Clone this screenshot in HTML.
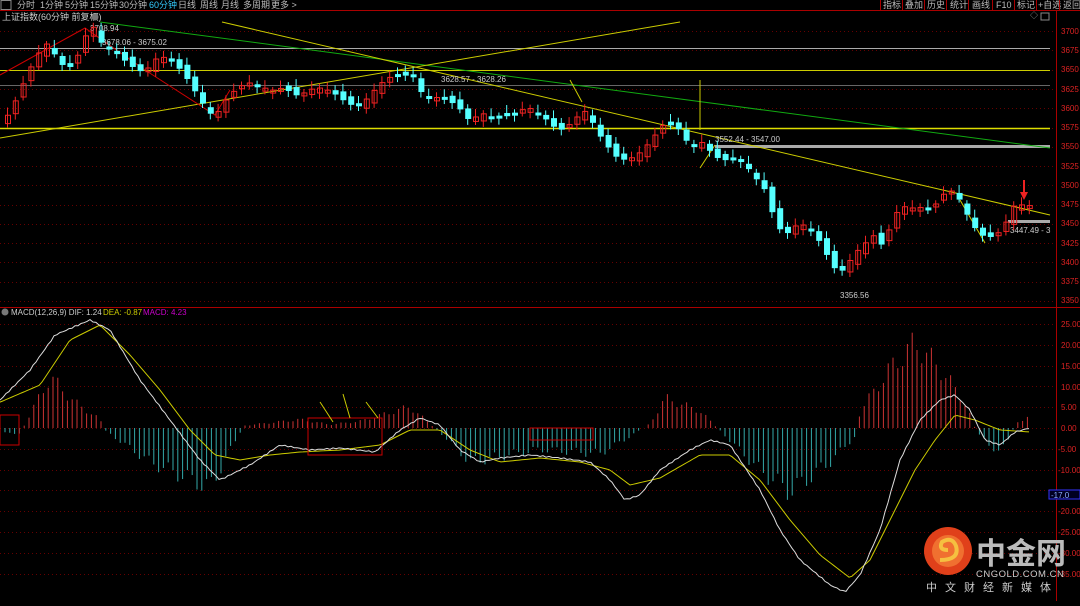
<!DOCTYPE html>
<html><head><meta charset="utf-8"><style>
body{margin:0;background:#000;width:1080px;height:601px;overflow:hidden;font-family:"Liberation Sans","Noto Sans CJK SC",sans-serif;}
svg text{font-family:"Liberation Sans","Noto Sans CJK SC",sans-serif;}
</style></head><body>
<svg id="s" width="1080" height="601" xmlns="http://www.w3.org/2000/svg">
<rect width="1080" height="601" fill="#000"/>
<g id="grid"></g>
<line x1="0" y1="10.5" x2="1080" y2="10.5" stroke="#a00" />
<rect x="1" y="0.5" width="10" height="9" fill="none" stroke="#888"/>
<g font-size="9" fill="#bbb">
<text x="17" y="8">分时</text><text x="40" y="8">1分钟</text><text x="65" y="8">5分钟</text><text x="90" y="8">15分钟</text><text x="119" y="8">30分钟</text>
<text x="149" y="8" fill="#3cf">60分钟</text><text x="178" y="8">日线</text><text x="200" y="8">周线</text><text x="221" y="8">月线</text><text x="243" y="8">多周期</text><text x="271" y="8">更多 &gt;</text>
<text x="883" y="8">指标</text><text x="905" y="8">叠加</text><text x="927" y="8">历史</text><text x="950" y="8">统计</text><text x="972" y="8">画线</text><text x="996" y="8">F10</text><text x="1017" y="8">标记</text><text x="1038" y="8">+自选</text><text x="1063" y="8">返回</text>
</g>
<g stroke="#a00"><line x1="880.5" y1="0" x2="880.5" y2="10"/><line x1="902.5" y1="0" x2="902.5" y2="10"/><line x1="924.5" y1="0" x2="924.5" y2="10"/><line x1="946.5" y1="0" x2="946.5" y2="10"/><line x1="968.5" y1="0" x2="968.5" y2="10"/><line x1="992.5" y1="0" x2="992.5" y2="10"/><line x1="1014.5" y1="0" x2="1014.5" y2="10"/><line x1="1036.5" y1="0" x2="1036.5" y2="10"/><line x1="1059.5" y1="0" x2="1059.5" y2="10"/></g>
<text x="2" y="20" font-size="9" fill="#ccc">上证指数(60分钟 前复权)</text>
<circle cx="95" cy="17" r="3.5" fill="#777"/>
<line x1="1056.5" y1="11" x2="1056.5" y2="601" stroke="#a00"/>
<line x1="0" y1="307.5" x2="1080" y2="307.5" stroke="#a00"/>
<g font-size="8" fill="#d22">
<text x="1061" y="34">3700</text><text x="1061" y="53">3675</text><text x="1061" y="72">3650</text><text x="1061" y="92">3625</text><text x="1061" y="111">3600</text><text x="1061" y="130">3575</text><text x="1061" y="149">3550</text><text x="1061" y="169">3525</text><text x="1061" y="188">3500</text><text x="1061" y="207">3475</text><text x="1061" y="226">3450</text><text x="1061" y="246">3425</text><text x="1061" y="265">3400</text><text x="1061" y="284">3375</text><text x="1061" y="303">3350</text>
<text x="1061" y="327">25.00</text><text x="1061" y="348">20.00</text><text x="1061" y="369">15.00</text><text x="1061" y="390">10.00</text><text x="1061" y="410">5.00</text><text x="1061" y="431">0.00</text><text x="1058" y="452">-5.00</text><text x="1058" y="473">-10.00</text><text x="1058" y="514">-20.00</text><text x="1058" y="535">-25.00</text><text x="1058" y="556">-30.00</text><text x="1058" y="577">-35.00</text>
</g>
<rect x="1049" y="490" width="31" height="9" fill="#002" stroke="#33f"/>
<text x="1051" y="498" font-size="8" fill="#8af">-17.0</text>
<text x="1030" y="18" font-size="8" fill="#999">◇</text>
<rect x="1041" y="13" width="8" height="7" fill="none" stroke="#888"/>
<circle cx="5" cy="312" r="3.5" fill="#777"/>
<text x="11" y="315" font-size="8" fill="#ccc">MACD(12,26,9)  DIF: 1.24</text>
<text x="103" y="315" font-size="8" fill="#cc0">DEA: -0.87</text>
<text x="143" y="315" font-size="8" fill="#c0c">MACD: 4.23</text>
<line x1="0" y1="48.5" x2="1050" y2="48.5" stroke="#aaa"/>
<line x1="0" y1="70.5" x2="1050" y2="70.5" stroke="#cc0"/>
<line x1="0" y1="85.5" x2="1050" y2="85.5" stroke="#666"/>
<line x1="0" y1="128.5" x2="1050" y2="128.5" stroke="#dd0" stroke-width="1.5"/>
<line x1="715" y1="146.5" x2="1050" y2="146.5" stroke="#aaa" stroke-width="3"/>
<line x1="1008" y1="221.5" x2="1050" y2="221.5" stroke="#aaa" stroke-width="3"/>
<line x1="100" y1="22" x2="1050" y2="148" stroke="#1a1"/>
<line x1="0" y1="138" x2="680" y2="22" stroke="#cc0"/>
<line x1="222" y1="22" x2="1050" y2="215" stroke="#cc0"/>
<line x1="700" y1="80" x2="700" y2="130" stroke="#cc0"/>
<line x1="570" y1="80" x2="582" y2="102" stroke="#cc0"/>
<line x1="700" y1="168" x2="715" y2="145" stroke="#cc0"/>
<line x1="960" y1="200" x2="985" y2="243" stroke="#cc0"/>
<path d="M0 75 L85 28 L145 70 L215 115 L230 90" fill="none" stroke="#c00"/>
<path d="M1024 180 L1024 195" stroke="#e22" stroke-width="2"/><path d="M1020 192 L1024 200 L1028 192Z" fill="#e22"/>
<g font-size="8" fill="#ccc">
<text x="90" y="31">3708.94</text><text x="102" y="45">3678.06 - 3675.02</text><text x="441" y="82">3628.57 - 3628.26</text><text x="715" y="142">3552.44 - 3547.00</text><text x="1010" y="233">3447.49 - 3</text><text x="840" y="298">3356.56</text>
</g>
<g id="cand"></g>
<g id="hist"></g>
<path id="dea" fill="none" stroke="#cc0"/>
<path id="dif" fill="none" stroke="#ddd"/>
<rect x="0" y="415" width="19" height="30" fill="none" stroke="#c00"/>
<rect x="308" y="418" width="74" height="37" fill="none" stroke="#c00"/>
<rect x="530" y="428" width="63" height="12" fill="none" stroke="#c00"/>
<path d="M320 402 L333 422 M343 394 L350 418 M366 402 L378 418" stroke="#cc0"/>
<circle cx="948" cy="551" r="24" fill="#e0401a"/>
<circle cx="948" cy="551" r="16" fill="#f07030"/>
<path d="M940 560 Q960 560 956 546 Q952 536 942 542 Q938 550 948 550" fill="none" stroke="#f5c040" stroke-width="4"/>
<text x="976" y="564" font-size="30" font-weight="bold" fill="#bbb">中金网</text>
<text x="976" y="577" font-size="9.5" fill="#ccc" letter-spacing="0.5">CNGOLD.COM.CN</text>
<text x="926" y="591" font-size="11" fill="#ccc" letter-spacing="8">中文财经新媒体</text>
</svg>
<script>
const NS="http://www.w3.org/2000/svg";
function el(t,a,p){const e=document.createElementNS(NS,t);for(const k in a)e.setAttribute(k,a[k]);document.getElementById(p).appendChild(e);return e;}
for(const y of [31,50,70,89,108,128,147,166,185,205,224,243,262,282,301]) el('line',{x1:0,x2:1056,y1:y+.5,y2:y+.5,stroke:'#600','stroke-dasharray':'1 3'},'grid');
for(let i=0;i<13;i++){const y=324+i*20.8;el('line',{x1:0,x2:1056,y1:Math.round(y)+.5,y2:Math.round(y)+.5,stroke:'#600','stroke-dasharray':'1 3'},'grid');}
function interp(pts,x){for(let i=1;i<pts.length;i++){if(x<=pts[i][0]){const a=pts[i-1],b=pts[i];return a[1]+(b[1]-a[1])*(x-a[0])/(b[0]-a[0]);}}return pts[pts.length-1][1];}
const P=[[5,115],[20,95],[40,60],[50,45],[60,60],[75,60],[85,35],[95,30],[105,55],[125,60],[145,65],[160,55],[175,70],[190,85],[205,100],[215,110],[230,95],[250,90],[270,88],[285,80],[300,95],[320,95],[340,95],[360,100],[380,90],[400,80],[415,72],[425,90],[440,95],[455,110],[470,125],[485,110],[500,110],[515,115],[530,115],[545,120],[560,125],[575,115],[585,110],[595,130],[605,150],[620,160],[635,150],[650,140],[665,130],[680,135],[690,145],[705,135],[715,150],[725,160],[740,165],[755,180],[765,185],[775,210],[785,230],[800,225],[815,240],[830,260],[840,270],[850,255],[860,245],[875,240],[885,255],[895,220],[905,205],[920,200],[935,205],[950,195],[960,205],[970,220],[980,230],[995,230],[1005,225],[1015,210],[1025,212]];
let prev=interp(P,0);
for(let x=5;x<=1028;x+=7.8){let c=interp(P,x+4)+Math.sin(x*1.7)*7;let o=prev+Math.cos(x*2.3)*4;const up=c<o;const top=Math.min(o,c),h=Math.max(3,Math.abs(o-c));const col=up?'#e22':'#5ff';
el('line',{x1:x+2.5,x2:x+2.5,y1:top-3-Math.abs(Math.sin(x))*5,y2:top+h+3+Math.abs(Math.cos(x))*3,stroke:col},'cand');
el('rect',up?{x:x+.5,y:top,width:5,height:h,fill:'none',stroke:col}:{x:x,y:top,width:6,height:h,fill:col},'cand');prev=c;}
const H=[[0,0],[5,-6],[20,-6],[25,5],[50,60],[75,30],[100,10],[105,-3],[150,-40],[210,-70],[240,-5],[245,3],[300,10],[330,4],[360,8],[410,25],[430,5],[440,-5],[470,-40],[540,-25],[600,-30],[630,-10],[650,5],[665,35],[700,20],[720,-3],[760,-50],[790,-75],[830,-40],[855,-10],[860,20],[890,70],[915,100],[940,70],[965,30],[975,0],[980,-10],[1000,-30],[1012,-5],[1015,5],[1030,15]];
for(let x=5;x<=1030;x+=4.8){const v=interp(H,x)*(0.85+0.15*Math.sin(x));el('line',{x1:x,x2:x,y1:428,y2:428-v,stroke:v>0?'#c33':'#3aa'},'hist');}
const DIF=[[5,395],[30,370],[55,335],[90,320],[110,330],[140,380],[170,420],[200,460],[220,480],[250,465],[280,445],[310,450],[340,448],[375,452],[400,430],[420,418],[440,425],[460,450],[480,462],[500,458],[530,455],[560,458],[590,462],[610,480],[625,500],[640,495],[660,470],[690,450],[710,440],[730,445],[760,490],[780,530],[800,560],[830,585],[845,592],[860,575],[880,530],[900,460],[920,420],[940,400],[955,395],[970,410],[985,440],[1000,445],[1015,432],[1030,428]];
const DEA=[[5,400],[40,385],[70,340],[100,325],[130,355],[160,390],[190,430],[215,455],[240,460],[270,455],[300,452],[340,450],[380,445],[410,430],[440,430],[470,450],[500,462],[540,458],[580,462],[610,470],[630,485],[660,478],[700,455],[730,455],[760,480],[790,520],[820,555],[850,578],[870,560],[890,520],[915,470],[935,440],[955,415],[975,420],[1000,430],[1030,432]];
function path(pts,j){let d='';for(let x=0;x<=1030;x+=3){d+=(x?'L':'M')+x+' '+(interp(pts,x)+(j?Math.sin(x*0.9)*0.6:0)).toFixed(1);}return d;}
document.getElementById('dif').setAttribute('d',path(DIF,1));
document.getElementById('dea').setAttribute('d',path(DEA,0));
</script>
</body></html>
